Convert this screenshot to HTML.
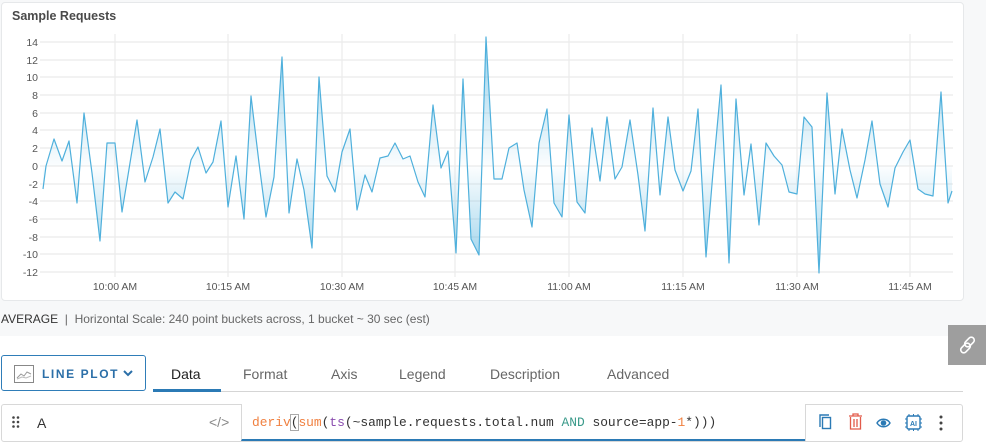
<!DOCTYPE html>
<html><head><meta charset="utf-8"><style>
*{box-sizing:border-box;margin:0;padding:0}
body{width:986px;height:446px;overflow:hidden;background:#fff;font-family:"Liberation Sans",sans-serif;position:relative}
.top{position:absolute;left:0;top:0;width:986px;height:336px;background:#f7f8f9}
.panel{position:absolute;left:1px;top:2px;width:963px;height:299px;background:#fff;border:1px solid #e6e8ea;border-radius:4px}
.title{position:absolute;left:12px;top:9px;font-size:12.5px;font-weight:bold;color:#4a4a4a}
.avg{position:absolute;left:1px;top:312px;font-size:12px;color:#666}
.avg b{font-weight:normal;color:#333}
.link{position:absolute;left:948px;top:325px;width:38px;height:40px;background:#9e9e9e}
.lp{position:absolute;left:1px;top:355px;width:145px;height:36px;border:1px solid #2f7db8;border-radius:3px;background:#fff}
.lp span{position:absolute;left:40px;top:11px;font-size:12px;letter-spacing:1.6px;color:#2b6fa8;font-weight:bold}
.tab{position:absolute;top:366px;font-size:14px;color:#666}
.tabline{position:absolute;left:153px;top:391px;width:810px;height:1px;background:#d5d5d5}
.tabsel{position:absolute;left:153px;top:389px;width:68px;height:3px;background:#2b7ab5}
.row{position:absolute;left:1px;top:404px;width:962px;height:38px;border:1px solid #d8d8d8;border-radius:3px;background:#fff}
.ed{position:absolute;left:241px;top:404px;width:564px;height:37px;border-left:1px solid #d8d8d8;border-bottom:2px solid #2b7ab5;background:#fff}
.code{position:absolute;left:252px;top:415px;font-family:"Liberation Mono",monospace;font-size:12.9px;color:#333;white-space:pre}
.icons{position:absolute;left:805px;top:404px;width:158px;height:37px;border-left:1px solid #d8d8d8}
</style></head><body>
<div class="top"></div>
<div class="panel"></div>
<div class="title">Sample Requests</div>
<svg style="position:absolute;left:0;top:0" width="986" height="300">
<defs><linearGradient id="g" gradientUnits="userSpaceOnUse" x1="0" y1="37" x2="0" y2="273">
<stop offset="0" stop-color="#4fb0dc" stop-opacity=".6"/><stop offset=".55" stop-color="#4fb0dc" stop-opacity=".02"/><stop offset="1" stop-color="#4fb0dc" stop-opacity=".6"/></linearGradient></defs>
<g stroke="#ebebeb" stroke-width="1.2">
<line x1="40" x2="953" y1="42" y2="42"/><line x1="40" x2="953" y1="60" y2="60"/><line x1="40" x2="953" y1="77" y2="77"/><line x1="40" x2="953" y1="95" y2="95"/><line x1="40" x2="953" y1="113" y2="113"/><line x1="40" x2="953" y1="130" y2="130"/><line x1="40" x2="953" y1="148" y2="148"/><line x1="40" x2="953" y1="166" y2="166"/><line x1="40" x2="953" y1="184" y2="184"/><line x1="40" x2="953" y1="201" y2="201"/><line x1="40" x2="953" y1="219" y2="219"/><line x1="40" x2="953" y1="237" y2="237"/><line x1="40" x2="953" y1="254" y2="254"/><line x1="40" x2="953" y1="272" y2="272"/>
<line x1="115" x2="115" y1="34" y2="277"/><line x1="228" x2="228" y1="34" y2="277"/><line x1="342" x2="342" y1="34" y2="277"/><line x1="455" x2="455" y1="34" y2="277"/><line x1="569" x2="569" y1="34" y2="277"/><line x1="683" x2="683" y1="34" y2="277"/><line x1="797" x2="797" y1="34" y2="277"/><line x1="910" x2="910" y1="34" y2="277"/>
</g>
<g font-size="10.5" fill="#555" text-anchor="end">
<text x="38" y="46">14</text><text x="38" y="64">12</text><text x="38" y="81">10</text><text x="38" y="99">8</text><text x="38" y="117">6</text><text x="38" y="134">4</text><text x="38" y="152">2</text><text x="38" y="170">0</text><text x="38" y="188">-2</text><text x="38" y="205">-4</text><text x="38" y="223">-6</text><text x="38" y="241">-8</text><text x="38" y="258">-10</text><text x="38" y="276">-12</text>
</g>
<g font-size="10.5" fill="#555" text-anchor="middle">
<text x="115" y="290">10:00 AM</text><text x="228" y="290">10:15 AM</text><text x="342" y="290">10:30 AM</text><text x="455" y="290">10:45 AM</text><text x="569" y="290">11:00 AM</text><text x="683" y="290">11:15 AM</text><text x="797" y="290">11:30 AM</text><text x="910" y="290">11:45 AM</text>
</g>
<polygon fill="url(#g)" points="43,166 43,189 46,166 54,139 62,161 69,141 77,203 84,113 92,173 100,241 107,143 115,143 122,212 130,163 137,120 145,182 153,157 160,129 168,203 175,192 183,199 191,160 198,147 206,173 213,162 221,121 228,207 236,156 244,219 251,96 259,163 266,217 274,177 282,57 289,213 297,159 304,190 312,248 319,77 327,176 335,192 342,152 350,129 357,210 365,175 372,192 380,158 388,156 395,143 403,159 410,156 418,182 425,197 433,105 441,168 448,151 456,253 463,79 471,239 479,255 486,37 494,179 502,179 509,148 517,143 524,190 532,227 539,143 547,109 554,203 562,217 569,115 577,202 585,213 592,128 600,181 607,117 615,179 622,167 630,120 638,175 645,231 653,108 660,195 668,117 675,170 683,191 691,171 698,109 706,257 713,172 721,85 729,263 736,99 744,195 751,144 759,225 766,143 774,156 782,165 789,192 797,194 804,117 812,127 819,273 827,93 835,194 842,129 850,170 857,198 865,160 872,121 880,184 888,207 895,168 903,152 910,140 918,189 925,194 933,196 941,92 948,203 952,191 952,166"/>
<polyline fill="none" stroke="#4fb0dc" stroke-width="1.2" stroke-linejoin="round" points="43,189 46,166 54,139 62,161 69,141 77,203 84,113 92,173 100,241 107,143 115,143 122,212 130,163 137,120 145,182 153,157 160,129 168,203 175,192 183,199 191,160 198,147 206,173 213,162 221,121 228,207 236,156 244,219 251,96 259,163 266,217 274,177 282,57 289,213 297,159 304,190 312,248 319,77 327,176 335,192 342,152 350,129 357,210 365,175 372,192 380,158 388,156 395,143 403,159 410,156 418,182 425,197 433,105 441,168 448,151 456,253 463,79 471,239 479,255 486,37 494,179 502,179 509,148 517,143 524,190 532,227 539,143 547,109 554,203 562,217 569,115 577,202 585,213 592,128 600,181 607,117 615,179 622,167 630,120 638,175 645,231 653,108 660,195 668,117 675,170 683,191 691,171 698,109 706,257 713,172 721,85 729,263 736,99 744,195 751,144 759,225 766,143 774,156 782,165 789,192 797,194 804,117 812,127 819,273 827,93 835,194 842,129 850,170 857,198 865,160 872,121 880,184 888,207 895,168 903,152 910,140 918,189 925,194 933,196 941,92 948,203 952,191"/>
</svg>
<div class="avg"><b>AVERAGE</b> &nbsp;|&nbsp; Horizontal Scale: 240 point buckets across, 1 bucket ~ 30 sec (est)</div>
<div class="link"><svg width="38" height="40"><g fill="none" stroke="#fff" stroke-width="1.6"><rect x="12" y="20" width="11" height="6" rx="3" transform="rotate(-45 17.5 23)"/><rect x="16" y="14" width="11" height="6" rx="3" transform="rotate(-45 21.5 17)"/></g></svg></div>
<div class="lp"><svg style="position:absolute;left:12px;top:9px" width="20" height="18"><rect x=".5" y=".5" width="19" height="17" fill="none" stroke="#888"/><polyline points="3,13 7,9 10,11 13,7 17,9" fill="none" stroke="#999"/><polyline points="3,14 8,12 12,13 17,11" fill="none" stroke="#bbb"/></svg><span>LINE PLOT</span><svg style="position:absolute;left:121px;top:13px" width="10" height="8"><polyline points="1,2 5,6 9,2" fill="none" stroke="#2b6fa8" stroke-width="2"/></svg></div>
<div class="tab" style="left:171px;color:#222">Data</div>
<div class="tab" style="left:243px">Format</div>
<div class="tab" style="left:331px">Axis</div>
<div class="tab" style="left:399px">Legend</div>
<div class="tab" style="left:490px">Description</div>
<div class="tab" style="left:607px">Advanced</div>
<div class="tabline"></div><div class="tabsel"></div>
<div class="row"></div>
<svg style="position:absolute;left:12px;top:416px" width="8" height="12" fill="#444"><circle cx="1.5" cy="1.5" r="1.3"/><circle cx="6" cy="1.5" r="1.3"/><circle cx="1.5" cy="6" r="1.3"/><circle cx="6" cy="6" r="1.3"/><circle cx="1.5" cy="10.5" r="1.3"/><circle cx="6" cy="10.5" r="1.3"/></svg>
<div style="position:absolute;left:37px;top:415px;font-size:14px;color:#333">A</div>
<div style="position:absolute;left:209px;top:414px;font-size:14px;color:#888">&lt;/&gt;</div>
<div class="ed"></div>
<div class="code"><span style="color:#f08040">deriv</span><span style="outline:1px solid #aaa">(</span><span style="color:#f08040">sum</span>(<span style="color:#8a4caf">ts</span>(~sample.requests.total.num <span style="color:#3a9a8a">AND</span> source=app-<span style="color:#f08040">1</span>*)))</div>
<div class="icons"></div>
<svg style="position:absolute;left:805px;top:404px" width="158" height="38">
<g fill="none" stroke="#2b7ab5" stroke-width="1.4"><path d="M15 23V11h9"/><rect x="17.5" y="13.5" width="8" height="11"/></g>
<g fill="none" stroke="#e25b4a" stroke-width="1.3"><path d="M44 12h13M48 12v-2h5v2M45.5 13v12h10V13M49 15v8M52 15v8"/></g>
<path d="M72 19c3-5 10-5 13 0c-3 5-10 5-13 0z" fill="none" stroke="#2b7ab5" stroke-width="1.4"/><circle cx="78.5" cy="19" r="2.8" fill="#2b7ab5"/>
<rect x="102" y="12" width="13" height="13" rx="1.5" fill="none" stroke="#2b7ab5" stroke-width="1.4"/><path d="M104 10v2M108.5 10v2M113 10v2M104 25v2M108.5 25v2M113 25v2M100 15h2M100 19h2M100 23h2M115 15h2M115 19h2M115 23h2" stroke="#2b7ab5"/><text x="108.5" y="22" font-size="7" font-weight="bold" fill="#2b7ab5" text-anchor="middle">AI</text>
<g fill="#444"><circle cx="136" cy="13" r="1.5"/><circle cx="136" cy="19" r="1.5"/><circle cx="136" cy="25" r="1.5"/></g>
</svg>
</body></html>
